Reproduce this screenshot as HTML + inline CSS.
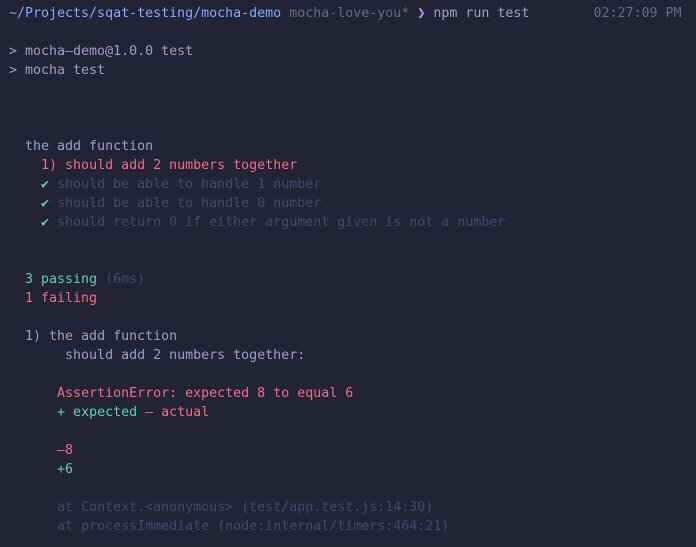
<!DOCTYPE html>
<html><head><style>
html,body{margin:0;padding:0;background:#222436;width:696px;height:547px;overflow:hidden}
pre{margin:0;position:absolute;left:9px;font-family:"DejaVu Sans Mono","Liberation Mono",monospace;font-size:13.3px;line-height:19px;color:#828bb8;white-space:pre}
.b{color:#82aaff}.g{color:#636a88}.p{color:#c099ff}.w{color:#a9b1d6}
.r{color:#ee6d85}.t{color:#5fcfb6}.d{color:#40476a}.m{color:#9aa0c4}
</style></head><body>
<pre style="top:4px"><span class="b">~/Projects/sqat-testing/mocha-demo</span> <span class="g">mocha-love-you*</span> <span class="p">❯</span> <span class="m">npm run test</span>        <span class="g">02:27:09 PM</span></pre>
<pre style="top:42px"><span class="m">&gt; mocha–demo@1.0.0 test
&gt; mocha test</span>



  <span class="m">the add function</span>
    <span class="r">1) should add 2 numbers together</span>
    <span class="t">✔</span> <span class="d">should be able to handle 1 number</span>
    <span class="t">✔</span> <span class="d">should be able to handle 0 number</span>
    <span class="t">✔</span> <span class="d">should return 0 if either argument given is not a number</span>


  <span class="t">3 passing</span> <span class="d">(6ms)</span>
  <span class="r">1 failing</span>

  <span class="m">1) the add function
       should add 2 numbers together:</span>

      <span class="r">AssertionError: expected 8 to equal 6</span>
      <span class="t">+ expected</span> <span class="r">– actual</span>

      <span class="r">–8</span>
      <span class="t">+6</span>

      <span class="d">at Context.&lt;anonymous&gt; (test/app.test.js:14:30)</span>
      <span class="d">at processImmediate (node:internal/timers:464:21)</span></pre>
</body></html>
